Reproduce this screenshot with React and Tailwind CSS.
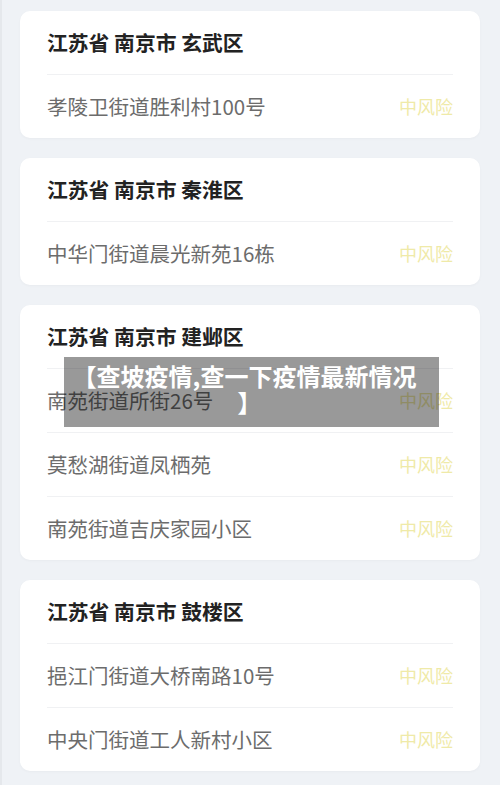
import React from "react";

const cards = [
  { title: "江苏省 南京市 玄武区", rows: ["孝陵卫街道胜利村100号"] },
  { title: "江苏省 南京市 秦淮区", rows: ["中华门街道晨光新苑16栋"] },
  {
    title: "江苏省 南京市 建邺区",
    rows: ["南苑街道所街26号", "莫愁湖街道凤栖苑", "南苑街道吉庆家园小区"],
  },
  { title: "江苏省 南京市 鼓楼区", rows: ["挹江门街道大桥南路10号", "中央门街道工人新村小区"] },
];

function Card({ title, rows }) {
  return (
    <div className="mx-[20px] rounded-[10px] bg-white px-[27px] shadow-[0_1px_3px_rgba(0,0,0,0.03)]">
      <div className="flex h-[63px] items-center text-[20.8px] font-bold text-[#222]">{title}</div>
      {rows.map((r) => (
        <div
          key={r}
          className="flex h-[64px] items-center justify-between border-t border-[#f0f1f3] pb-[1px]"
        >
          <span className="text-[20.5px] text-[#6c6c6c]">{r}</span>
          <span className="text-[18px] text-[#efeaa8]">中风险</span>
        </div>
      ))}
    </div>
  );
}

export default function App() {
  return (
    <div
      className="relative min-h-[785px] w-[500px] border-l-2 border-[#e5e8ec] bg-[#eff2f6] pt-[11px]"
      style={{ fontFamily: '"Noto Sans CJK SC", "Noto Sans", sans-serif' }}
    >
      <div className="-ml-[2px] flex flex-col gap-[20px]">
        {cards.map((c) => (
          <Card key={c.title} {...c} />
        ))}
      </div>
      <div className="absolute left-[62px] top-[357px] h-[70px] w-[375px] bg-[rgba(0,0,0,0.4)] pt-[6px] text-center text-[24px] font-bold leading-[26px] text-white">
        <div className="whitespace-nowrap pr-[14px]">【查坡疫情,查一下疫情最新情况</div>
        <div className="pr-[4px]">】</div>
      </div>
    </div>
  );
}
